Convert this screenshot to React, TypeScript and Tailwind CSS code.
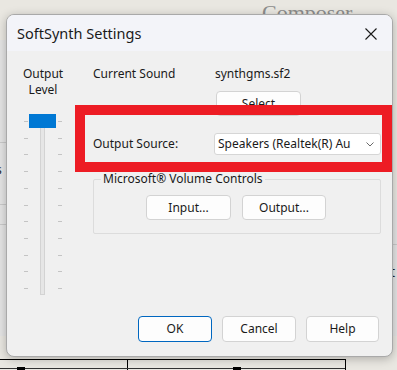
import React from "react";

const font = { fontFamily: '"Noto Sans", "Segoe UI", Arial, sans-serif' };

function Btn({ children, w, primary }: { children: React.ReactNode; w: string; primary?: boolean }) {
  return (
    <div
      className={`${w} flex items-center justify-center rounded-[4px] bg-[#fdfdfd] text-[12px] text-[#1a1a1a] border ${
        primary ? "border-[#0067c0]" : "border-[#d3d3d3]"
      }`}
    >
      {children}
    </div>
  );
}

const ticks = [0, 1, 2, 3, 4, 5, 6, 7, 8, 9, 10];

export default function App() {
  return (
    <div className="relative w-[397px] h-[370px] overflow-hidden bg-[#e9e7e1]" style={font}>
      {/* background app */}
      <div className="absolute left-0 top-[40px] w-[8px] h-[296px] bg-[#e4e4e4]">
        <div className="h-[103px] border-b border-[#c9c9c9]" />
        <div className="h-[20px]" />
        <div className="text-[12px] leading-[14px] text-[#222] -ml-[4px]">s</div>
        <div className="h-[28px] border-b border-[#c9c9c9]" />
        <div className="h-[20px] border-b border-[#c9c9c9]" />
      </div>
      <div className="absolute right-0 top-[200px] w-[6px] h-[136px] bg-[#e4e4e4]">
        <div className="h-[45px] border-b border-[#c9c9c9]" />
        <div className="text-[14px] leading-[14px] text-[#222] -ml-[1px] mt-[20px]">t</div>
      </div>
      <div
        className="absolute left-[262px] -top-[4px] text-[22px] text-[#8d8d8d]"
        style={{ fontFamily: '"Liberation Serif", serif' }}
      >
        Composer
      </div>
      <div className="absolute left-0 top-[359px] w-[346px] h-[11px] border-t border-r border-black">
        <div className="absolute left-[127px] top-0 h-[11px] border-l border-black" />
        <div className="absolute left-0 top-[8px] w-[345px] border-t border-[#333]" />
        <div className="absolute left-[17px] top-[7px] w-[8px] h-[4px] bg-black" />
        <div className="absolute left-[233px] top-[7px] w-[8px] h-[4px] bg-black" />
      </div>

      {/* dialog */}
      <div className="absolute left-[6px] top-[14px] w-[387px] h-[343px] rounded-[8px] border border-[#a9a9a9] bg-[#f0f0f0] shadow-[0_2px_10px_rgba(0,0,0,0.25)] overflow-hidden flex flex-col">
        <div className="h-[36px] shrink-0 bg-[#f3f4f9] flex items-center justify-between pl-[10px] pr-[15px]">
          <span className="text-[14.5px] text-[#1a1a1a] mt-[2px]">SoftSynth Settings</span>
          <svg width="12" height="12" viewBox="0 0 12 12" className="mt-[2px]">
            <path d="M0.5 0.5 L11.5 11.5 M11.5 0.5 L0.5 11.5" stroke="#1a1a1a" strokeWidth="1.1" />
          </svg>
        </div>

        <div className="flex-1 flex">
          {/* left slider column */}
          <div className="w-[72px] shrink-0 flex flex-col items-center pt-[15px]">
            <div className="text-[12px] leading-[16px] text-[#1a1a1a] text-center">
              Output
              <br />
              Level
            </div>
            <div className="relative w-[38px] h-[182px] mt-[16px]">
              {ticks.map((i) => (
                <React.Fragment key={i}>
                  <div
                    className="absolute left-0 w-[4px] h-px bg-[#c4c4c4]"
                    style={{ top: 7 + i * 16.7 }}
                  />
                  <div
                    className="absolute left-[34px] w-[4px] h-px bg-[#c4c4c4]"
                    style={{ top: 7 + i * 16.7 }}
                  />
                </React.Fragment>
              ))}
              <div className="absolute left-[16px] top-[12px] w-[5px] h-[169px] border border-[#d3d3d3] bg-[#e6e6e6]" />
              <div className="absolute left-[5px] top-0 w-[27px] h-[14px] bg-[#0078d4]" />
            </div>
          </div>

          {/* right content */}
          <div className="flex-1 flex flex-col pl-[14px] pt-[15px] text-[12px] text-[#1a1a1a]">
            <div className="flex leading-[16px]">
              <div className="w-[122px]">Current Sound</div>
              <div>synthgms.sf2</div>
            </div>
            <div className="flex mt-[9px] pl-[123px]">
              <Btn w="w-[85px] h-[25px]">Select</Btn>
            </div>
            <div className="flex items-center mt-[17px] h-[22px]">
              <div className="w-[121px]">Output Source:</div>
              <div className="w-[167px] h-[22px] bg-white border border-[#d6d6d6] rounded-[3px] flex items-center justify-between pl-[3px] pr-[6px]">
                <span className="whitespace-nowrap overflow-hidden">Speakers (Realtek(R) Au</span>
                <svg width="8" height="5" viewBox="0 0 8 5">
                  <path d="M0.5 0.5 L4 4 L7.5 0.5" fill="none" stroke="#6a6a6a" strokeWidth="1" />
                </svg>
              </div>
            </div>
            <div className="relative mt-[24px] w-[288px] h-[55px] border border-[#dcdcdc] rounded-[2px]">
              <div className="absolute left-[7px] -top-[9px] px-[2px] bg-[#f0f0f0] leading-[16px]">
                Microsoft® Volume Controls
              </div>
              <div className="flex gap-[11px] pl-[52px] pt-[15px]">
                <Btn w="w-[85px] h-[25px]">Input...</Btn>
                <Btn w="w-[84px] h-[25px]">Output...</Btn>
              </div>
            </div>
          </div>
        </div>

        <div className="shrink-0 flex justify-end gap-[10px] pr-[13px] pb-[14px]">
          <Btn w="w-[74px] h-[26px]" primary>
            OK
          </Btn>
          <Btn w="w-[74px] h-[26px]">Cancel</Btn>
          <Btn w="w-[73px] h-[26px]">Help</Btn>
        </div>
      </div>

      {/* red annotation box */}
      <div className="absolute left-[75px] top-[105px] w-[317px] h-[67px] border-[10px] border-[#ed1c24]" />
    </div>
  );
}
